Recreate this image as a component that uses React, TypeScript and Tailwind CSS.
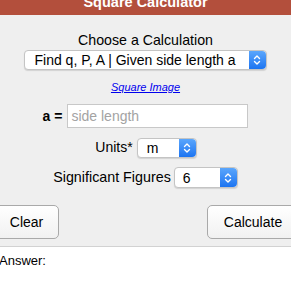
import React from "react"

type PickerProps = {
  value: string,
  className?: string,
  textClass?: string,
}

function Stepper() {
  return (
    <div className="w-[17px] self-stretch flex items-center justify-center rounded-r-[4px] bg-gradient-to-b from-[#5aa6fc] to-[#1b74f1]">
      <svg width="8" height="12" viewBox="0 0 8 12" fill="none" stroke="white" strokeWidth="1.4" strokeLinecap="round" strokeLinejoin="round">
        <path d="M1.5 4.5 L4 2 L6.5 4.5" />
        <path d="M1.5 7.5 L4 10 L6.5 7.5" />
      </svg>
    </div>
  )
}

function Picker({ value, className, textClass }: PickerProps) {
  return (
    <div className={`${className} h-[20px] flex items-center bg-white border border-[#c4c4c4] rounded-[4px] shadow-[0_1px_1px_rgba(0,0,0,0.12)]`}>
      <span className={`${textClass} flex-1 leading-[16px] whitespace-nowrap`}>{value}</span>
      <Stepper />
    </div>
  )
}

function Button({ title, className }: { title: string, className?: string }) {
  return <button className={`${className} shrink-0 h-[34px] border border-[#a9a9a9] rounded-[5px] bg-gradient-to-b from-white to-[#f1f1f1] text-[14px] leading-[16px] text-black text-center`}>
    {title}
  </button>
}

export default function App() {
  return (
    <div className="w-[291px] h-[291px] overflow-hidden bg-[#efefef] text-black font-['Liberation_Sans',Arial,sans-serif]">
      <div className="h-[15px] overflow-hidden bg-[#b34f3c] text-white font-bold text-[14.5px] leading-[5px] text-center">
        Square Calculator
      </div>

      <div className="flex flex-col items-center">
        <div className="mt-[17px] text-[14.2px] leading-[16px]">Choose a Calculation</div>
        <Picker
          value="Find q, P, A | Given side length a"
          className="mt-[2px] w-[243px] -ml-[1px]"
          textClass="pl-[10px] text-[14px]"
        />
        <a href="#" className="mt-[11px] text-[11px] leading-[13px] italic text-[#0000ee] underline">Square Image</a>

        <div className="mt-[10px] flex items-center gap-[5px]">
          <span className="font-bold text-[14px]">a =</span>
          <input
            className="w-[181px] h-[24px] border border-[#c8c8c8] bg-white px-[3px] text-[14px] placeholder:text-[#a3a3a3] outline-none"
            placeholder="side length"
          />
        </div>

        <div className="mt-[9px] flex items-center gap-[4px] ml-[1px]">
          <span className="text-[14px]">Units*</span>
          <Picker value="m" className="w-[60px]" textClass="pl-[9px] text-[14px]" />
        </div>

        <div className="mt-[9px] flex items-center gap-[3px]">
          <span className="text-[14.3px]">Significant Figures</span>
          <Picker value="6" className="w-[64px] h-[21px]" textClass="pl-[8px] text-[14px]" />
        </div>
      </div>

      <div className="mt-[17px] -ml-[6px] w-[305px] flex justify-between">
        <Button title="Clear" className="w-[65px]" />
        <Button title="Calculate" className="w-[92px]" />
      </div>

      <div className="mt-[7px] border-t border-[#d2d2d2] bg-white h-[60px] pt-[6px] text-[13px] leading-[15px]">
        <div className="-ml-[1px]">Answer:</div>
        <div className="mt-[20px]">15 m</div>
      </div>
    </div>
  )
}
